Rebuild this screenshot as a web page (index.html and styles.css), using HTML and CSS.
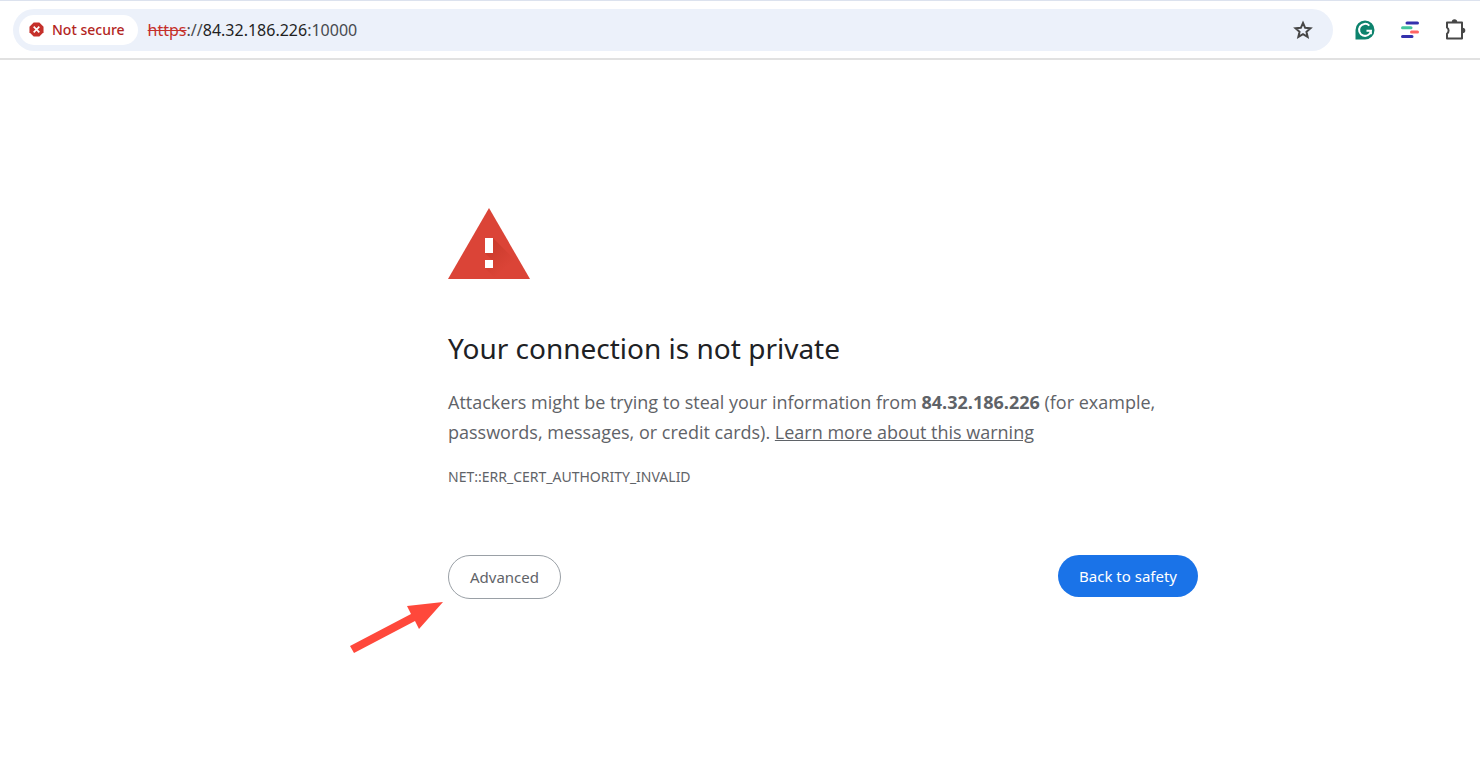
FILE: index.html
```html
<!DOCTYPE html>
<html lang="en">
<head>
<meta charset="utf-8">
<meta name="viewport" content="width=device-width, initial-scale=1">
<title>Privacy error</title>
<link rel="stylesheet" href="styles.css">
</head>
<body>
<header class="toolbar">
  <div class="address-bar">
    <button class="security-chip" type="button">
      <svg class="security-icon" viewBox="0 0 16 16" aria-hidden="true"><path fill="#c5302a" d="M5 .5h6L15.500 5v6L11 15.500H5L.5 11V5z"/><path stroke="#fff" stroke-width="1.800" d="m5 5 6 6m0-6-6 6"/></svg>
      <span>Not secure</span>
    </button>
    <div class="url"><s class="scheme">https</s><span class="slashes">://</span>84.32.186.226<span class="port">:10000</span></div>
    <button class="icon-button" type="button" aria-label="Bookmark this tab">
      <svg class="icon" viewBox="0 0 24 24"><path fill="none" stroke="#474747" stroke-width="2" d="m12 4.900 2.150 4.930 5.300.47-4 3.500 1.200 5.170L12 16.260l-4.650 2.710 1.200-5.170-4-3.500 5.300-.47z"/></svg>
    </button>
  </div>
  <nav class="extensions" aria-label="Extensions">
    <button class="icon-button" type="button" aria-label="Grammarly">
      <svg class="icon" viewBox="0 0 24 24"><path fill="#0d836d" d="M12 2.500A9.500 9.500 0 1 1 12 21.500H2.500V12A9.500 9.500 0 0 1 12 2.500z"/><path fill="none" stroke="#fff" stroke-width="2" d="M16.300 7.600A6 6 0 1 0 18 12.700h-4.500M17.900 12.700v3.500"/></svg>
    </button>
    <button class="icon-button" type="button" aria-label="Page outline">
      <svg class="icon" viewBox="0 0 24 24"><g stroke-width="3" stroke-linecap="round"><path stroke="#3431ad" d="M9 5h10.500M4.500 18.500H14"/><path stroke="#43c59e" d="M4.500 9.700h8.500"/><path stroke="#ff6464" d="M13.500 14h6"/></g></svg>
    </button>
    <button class="icon-button" type="button" aria-label="Extensions">
      <svg class="icon" viewBox="0 0 24 24"><path fill="none" stroke="#474747" stroke-width="2" stroke-linejoin="round" d="M4 4.500h15V20.500H4v-4.800a3.800 3.800 0 0 0 0-6.200z"/><path fill="#474747" d="M8.800 4a2.700 2.700 0 0 1 5.400 0zM19.500 9.700a2.800 2.800 0 0 1 0 5.600z"/></svg>
    </button>
  </nav>
</header>
<main class="interstitial">
  <svg class="warning-icon" viewBox="0 0 82 71" role="img" aria-label="Warning">
    <defs><linearGradient id="shade" x1="0" y1="0" x2="1" y2="1"><stop stop-color="#a52714" stop-opacity=".4"/><stop offset=".6" stop-color="#a52714" stop-opacity="0"/></linearGradient></defs>
    <path fill="#db4437" d="M41 0 82 71H0z"/>
    <path fill="url(#shade)" d="M45 30 82 67V71H63L37 45h8zM45 52l19 19H48L37 60h8z"/>
    <path fill="#fff" d="M37 30h8v15h-8zM37 52h8v8h-8z"/>
  </svg>
  <h1 class="title">Your connection is not private</h1>
  <p class="message">Attackers might be trying to steal your information from <strong>84.32.186.226</strong> (for example, passwords, messages, or credit cards). <a class="learn-more" href="#">Learn more about this warning</a></p>
  <p class="error-code">NET::ERR_CERT_AUTHORITY_INVALID</p>
  <div class="actions">
    <div class="advanced-wrap">
      <button class="button button-secondary" type="button">Advanced</button>
      <svg class="pointer" viewBox="0 0 93 52" aria-hidden="true"><path fill="#ff483b" d="M93 0 69 27l-4-8L4 51 0 44l61-32-4-8z"/></svg>
    </div>
    <button class="button button-primary" type="button">Back to safety</button>
  </div>
</main>
</body>
</html>
```
FILE: styles.css
```css
* {
  box-sizing: border-box;
}

body {
  min-height: 100vh;
  margin: 0;
  background: #fff;
  color: #5f6368;
  font-family: "Segoe UI", "Noto Sans", sans-serif;
}

button {
  border: 0;
  font: inherit;
  cursor: pointer;
}

.toolbar {
  display: flex;
  align-items: center;
  gap: 20px;
  height: 60px;
  padding: 0 13px;
  border-top: 1px solid #dce2ee;
  border-bottom: 2px solid #e1e1e1;
}

.address-bar {
  display: flex;
  flex: 1;
  align-items: center;
  gap: 10px;
  height: 42px;
  padding: 0 18px 0 6px;
  border-radius: 21px;
  background: #ecf1fa;
}

.security-chip {
  display: flex;
  align-items: center;
  gap: 8px;
  height: 30px;
  padding: 0 13px 0 10px;
  border-radius: 15px;
  background: #fff;
  color: #b3261e;
  font-size: 14px;
  font-weight: 500;
}

.security-icon {
  width: 15px;
  height: 15px;
}

.url {
  flex: 1;
  color: #1f1f1f;
  font-size: 16px;
}

.scheme {
  color: #c5302a;
}

.slashes,
.port {
  color: #474a4f;
}

.icon-button {
  display: flex;
  padding: 0;
  background: none;
}

.icon {
  width: 24px;
  height: 24px;
}

.extensions {
  display: flex;
  gap: 21px;
}

.interstitial {
  max-width: 1198px;
  padding: 148px 0 80px 448px;
}

.warning-icon {
  display: block;
  width: 82px;
  height: 71px;
}

.title {
  margin: 49px 0 19px;
  color: #202124;
  font-size: 28px;
  font-weight: 400;
  line-height: 40px;
}

.message {
  margin: 0;
  font-family: "Segoe UI", "Open Sans", sans-serif;
  font-size: 18px;
  line-height: 30px;
}

.learn-more {
  color: inherit;
}

.error-code {
  margin: 20px 0 0;
  font-size: 14px;
  line-height: 20px;
}

.actions {
  display: flex;
  align-items: flex-start;
  justify-content: space-between;
  margin-top: 68px;
}

.advanced-wrap {
  position: relative;
}

.button {
  height: 42px;
  padding: 0 21px;
  border-radius: 22px;
  font-size: 15px;
}

.button-primary {
  background: #1a73e8;
  color: #fff;
}

.button-secondary {
  height: 44px;
  border: 1px solid #9aa0a6;
  background: #fff;
  color: #5f6368;
}

.pointer {
  position: absolute;
  top: 47px;
  right: 118px;
  width: 93px;
  height: 52px;
}
```
